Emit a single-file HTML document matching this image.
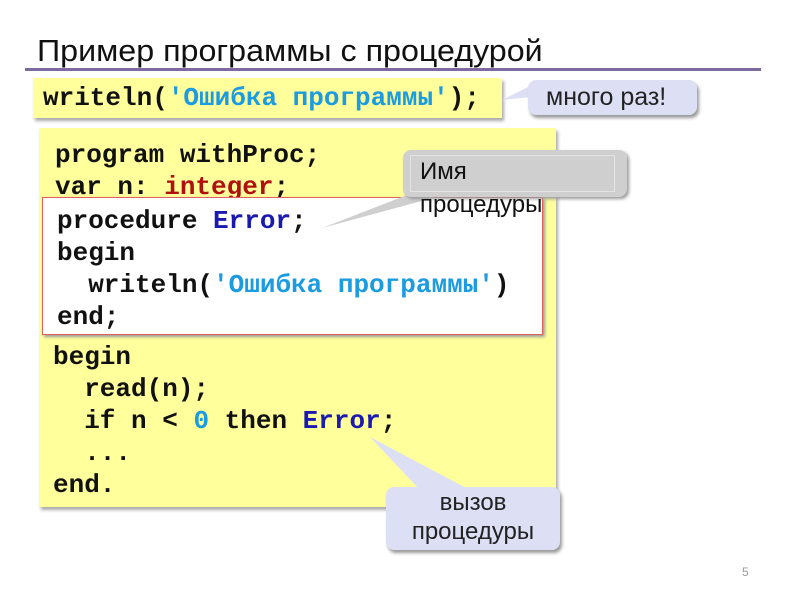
<!DOCTYPE html>
<html><head><meta charset="utf-8"><style>
body{margin:0;width:800px;height:600px;background:#fff;position:relative;overflow:hidden;font-family:"Liberation Sans",sans-serif}
.abs{position:absolute}
.mono{font-family:"Liberation Mono",monospace;font-weight:bold;font-size:26px;white-space:pre;line-height:32px;color:#111}
.s{color:#1b9be0}.k{color:#b01010}.b{color:#1a1ab0}
</style></head><body>
<div class="abs" style="left:37px;top:33px;font-size:31px;color:#111;transform:scaleX(1.04);transform-origin:left;white-space:nowrap">Пример программы с процедурой</div>
<div class="abs" style="left:25px;top:68px;width:736px;height:3px;background:#7d6a9f"></div>
<div class="abs" style="left:33px;top:78px;width:469px;height:40px;background:#ffff9c;box-shadow:2px 3px 3px #aaa"></div>
<div class="abs mono" style="left:43px;top:82px">writeln(<span class="s">'Ошибка программы'</span>);</div>
<svg class="abs" style="left:0;top:0" width="800" height="600">
<polygon points="530,86 502,100 540,96" fill="#dde0f5"/>
</svg>
<div class="abs" style="left:528px;top:80px;width:169px;height:35px;background:#dde0f5;border-radius:8px;box-shadow:2px 3px 3px #999"></div>
<div class="abs" style="left:546px;top:83px;font-size:25px;color:#222">много раз!</div>
<div class="abs" style="left:39px;top:128px;width:517px;height:379px;background:#ffff9c;box-shadow:2px 3px 3px #aaa"></div>
<div class="abs mono" style="left:55px;top:139px">program withProc;
var n: <span class="k">integer</span>;</div>
<div class="abs" style="left:42px;top:197px;width:499px;height:136px;background:#fff;border:1px solid #e06060;box-shadow:2px 2px 3px #999"></div>
<div class="abs mono" style="left:57px;top:205px">procedure <span class="b">Error</span>;
begin
  writeln(<span class="s">'Ошибка программы'</span>)
end;</div>
<div class="abs mono" style="left:53px;top:341px">begin
  read(n);
  if n &lt; <span class="s">0</span> then <span class="b">Error</span>;
  ...
end.</div>
<svg class="abs" style="left:0;top:0" width="800" height="600">
<polygon points="370,437 420,490 470,490" fill="#dde0f5"/>
<polygon points="420,190 322,228 440,196" fill="#cfcfcf"/>
</svg>
<div class="abs" style="left:403px;top:150px;width:224px;height:47px;background:#cfcfcf;border-radius:8px;box-shadow:2px 2px 3px #999"></div>
<div class="abs" style="left:410px;top:155px;width:203px;height:35px;border:1px solid #e4e4e4"></div>
<div class="abs" style="left:420px;top:155px;font-size:24px;line-height:33px;color:#111">Имя<br>процедуры</div>
<div class="abs" style="left:386px;top:487px;width:174px;height:63px;background:#dde0f5;border-radius:8px;box-shadow:2px 3px 3px #999"></div>
<div class="abs" style="left:386px;top:488px;width:174px;text-align:center;font-size:24px;line-height:29px;color:#222">вызов<br>процедуры</div>
<div class="abs" style="left:742px;top:565px;font-size:12px;color:#999">5</div>
</body></html>
